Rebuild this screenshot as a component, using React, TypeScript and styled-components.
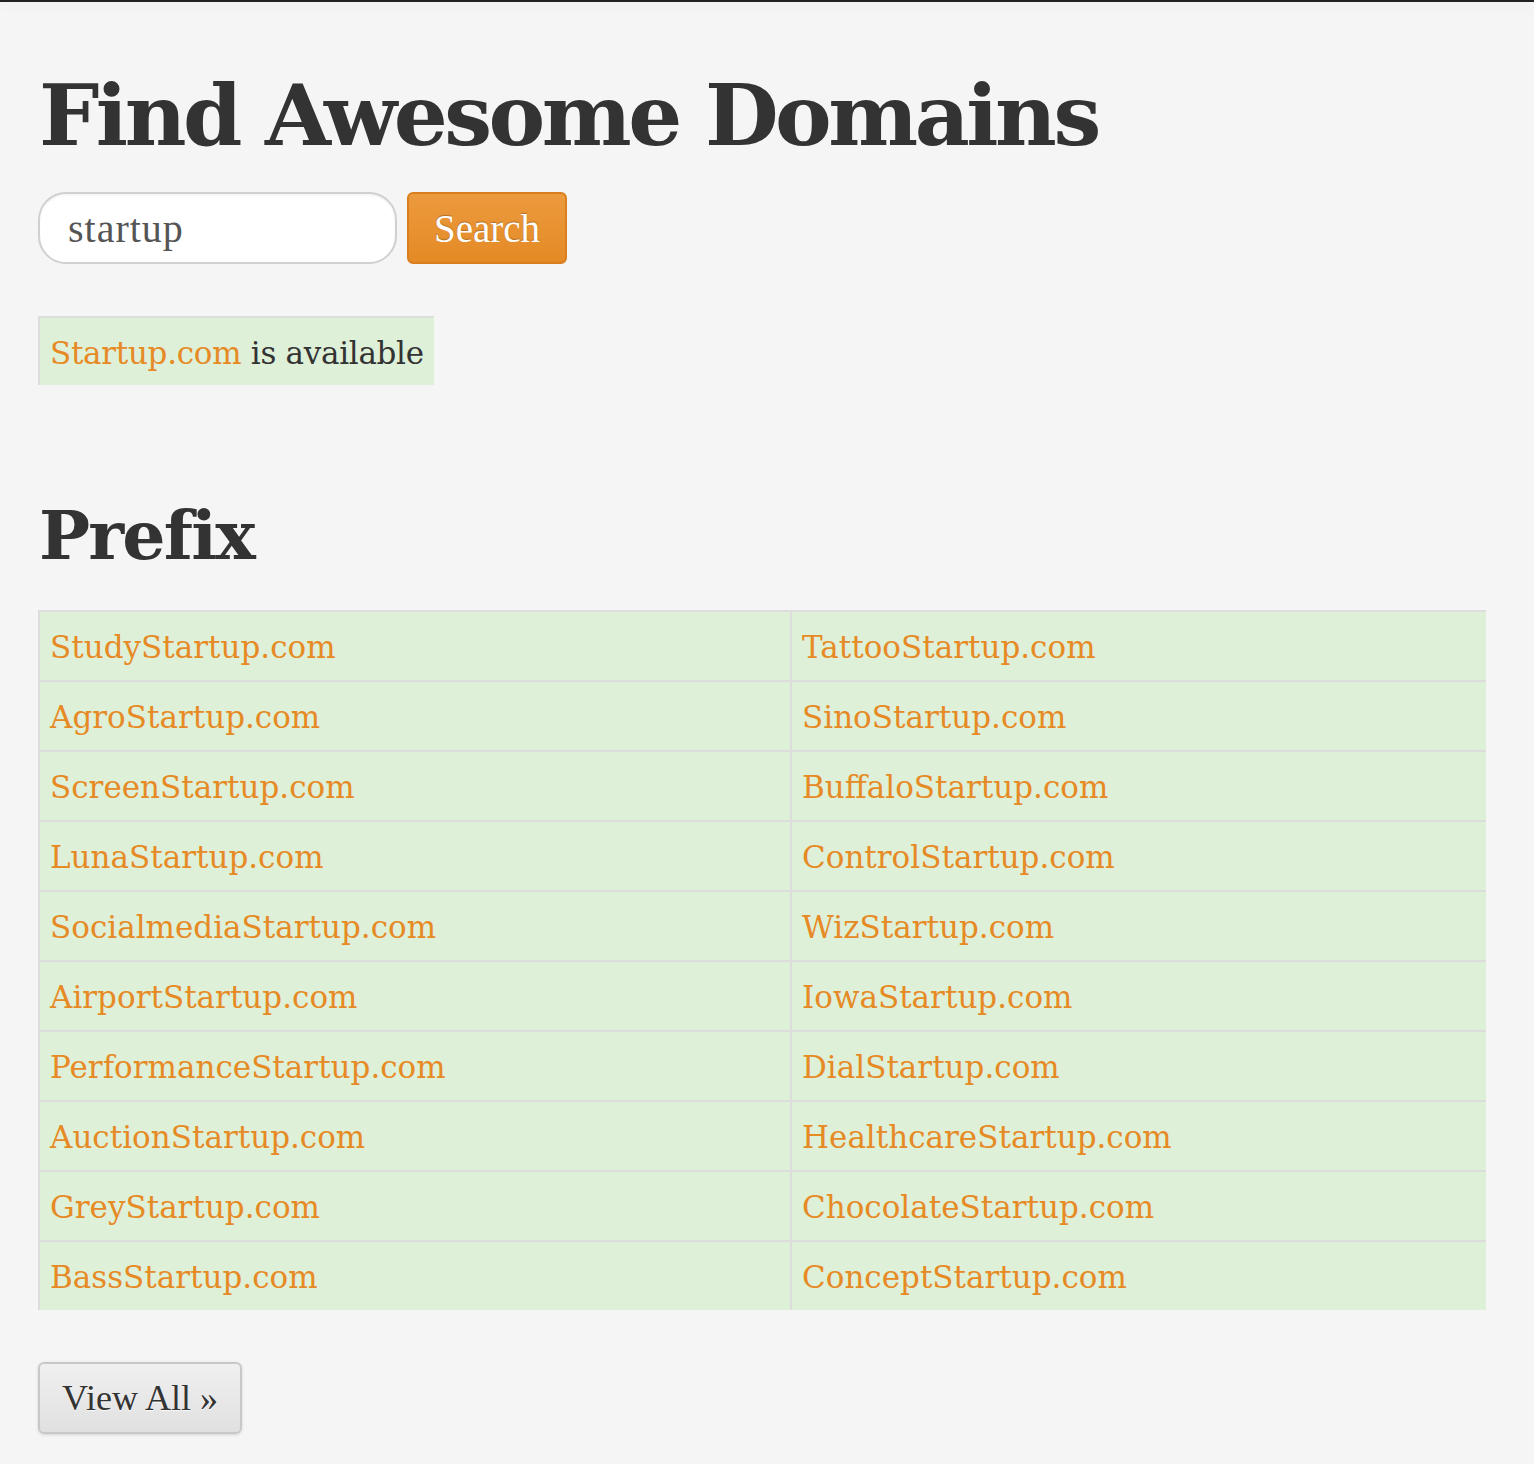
import React from "react";
import styled, { createGlobalStyle } from "styled-components";

const Global = createGlobalStyle`
  html, body { margin: 0; padding: 0; background: #f5f5f5; }
  body { font-family: "DejaVu Serif", "Liberation Serif", serif; color: #333; }
`;

const TopBar = styled.div`
  height: 2px;
  background: #222;
  box-shadow: 0 3px 14px rgba(0, 0, 0, 0.08);
`;

const Page = styled.main`
  padding: 0 48px 30px 38px;
  display: flex;
  flex-direction: column;
  align-items: flex-start;
`;

const Title = styled.h1`
  margin: 58px 0 0 1px;
  font-family: "DejaVu Serif", serif;
  font-weight: bold;
  font-size: 85px;
  line-height: 110px;
  letter-spacing: -3.5px;
  color: #333;
`;

const SearchForm = styled.form`
  display: flex;
  gap: 10px;
  margin-top: 22px;
`;

const SearchInput = styled.input`
  box-sizing: border-box;
  width: 359px;
  height: 72px;
  border: 2px solid #d0d0d0;
  border-radius: 28px;
  background: #fff;
  padding: 0 28px;
  font-family: "Liberation Serif", serif;
  font-size: 40px;
  letter-spacing: 1px;
  color: #555;
  outline: none;
  box-shadow: inset 0 2px 2px rgba(0, 0, 0, 0.04);
`;

const SearchButton = styled.button`
  box-sizing: border-box;
  width: 160px;
  height: 72px;
  border: 2px solid #d97f1f;
  border-radius: 6px;
  background: linear-gradient(#ec9a3e, #e48a25);
  color: #fff;
  font-family: "Liberation Serif", serif;
  font-size: 39px;
  text-shadow: 0 -1px 1px rgba(0, 0, 0, 0.25);
  padding: 0;
  cursor: pointer;
`;

const Notice = styled.div`
  margin-top: 52px;
  box-sizing: border-box;
  height: 69px;
  display: flex;
  align-items: center;
  padding: 2px 10px 0 10px;
  background: #dff0d8;
  border-top: 2px solid #ddd;
  border-left: 2px solid #ddd;
  font-size: 31px;
  letter-spacing: -0.3px;
  color: #333;
`;

const DomainLink = styled.a`
  color: #e68a25;
  text-decoration: none;
`;

const SectionTitle = styled.h2`
  margin: 105px 0 0 1px;
  font-weight: bold;
  font-size: 68px;
  line-height: 90px;
  letter-spacing: -1.8px;
  color: #333;
`;

const Table = styled.div`
  margin-top: 30px;
  align-self: stretch;
  display: grid;
  grid-template-columns: 750px 1fr;
  border-left: 2px solid #ddd;
  background: #dff0d8;
`;

const Cell = styled.div<{ $right?: boolean }>`
  box-sizing: border-box;
  height: 70px;
  display: flex;
  align-items: center;
  padding: 2px 10px 0 10px;
  border-top: 2px solid #ddd;
  border-left: ${(p) => (p.$right ? "2px solid #ddd" : "none")};
  font-size: 31px;
`;

const ViewAll = styled.button`
  margin-top: 52px;
  box-sizing: border-box;
  width: 204px;
  height: 72px;
  border: 2px solid #c8c8c8;
  border-radius: 6px;
  background: linear-gradient(#f0f0f0, #e0e0e0);
  color: #333;
  font-family: "Liberation Serif", serif;
  font-size: 36px;
  text-shadow: 0 1px 1px rgba(255, 255, 255, 0.8);
  box-shadow: 0 1px 3px rgba(0, 0, 0, 0.12);
  padding: 0;
  cursor: pointer;
`;

const rows: [string, string][] = [
  ["StudyStartup.com", "TattooStartup.com"],
  ["AgroStartup.com", "SinoStartup.com"],
  ["ScreenStartup.com", "BuffaloStartup.com"],
  ["LunaStartup.com", "ControlStartup.com"],
  ["SocialmediaStartup.com", "WizStartup.com"],
  ["AirportStartup.com", "IowaStartup.com"],
  ["PerformanceStartup.com", "DialStartup.com"],
  ["AuctionStartup.com", "HealthcareStartup.com"],
  ["GreyStartup.com", "ChocolateStartup.com"],
  ["BassStartup.com", "ConceptStartup.com"],
];

export default function App() {
  return (
    <>
      <Global />
      <TopBar />
      <Page>
        <Title>Find Awesome Domains</Title>
        <SearchForm onSubmit={(e) => e.preventDefault()}>
          <SearchInput defaultValue="startup" />
          <SearchButton type="submit">Search</SearchButton>
        </SearchForm>
        <Notice>
          <DomainLink href="#">Startup.com</DomainLink>&nbsp;is available
        </Notice>
        <SectionTitle>Prefix</SectionTitle>
        <Table>
          {rows.map(([a, b]) => (
            <React.Fragment key={a}>
              <Cell>
                <DomainLink href="#">{a}</DomainLink>
              </Cell>
              <Cell $right>
                <DomainLink href="#">{b}</DomainLink>
              </Cell>
            </React.Fragment>
          ))}
        </Table>
        <ViewAll type="button">View All »</ViewAll>
      </Page>
    </>
  );
}
